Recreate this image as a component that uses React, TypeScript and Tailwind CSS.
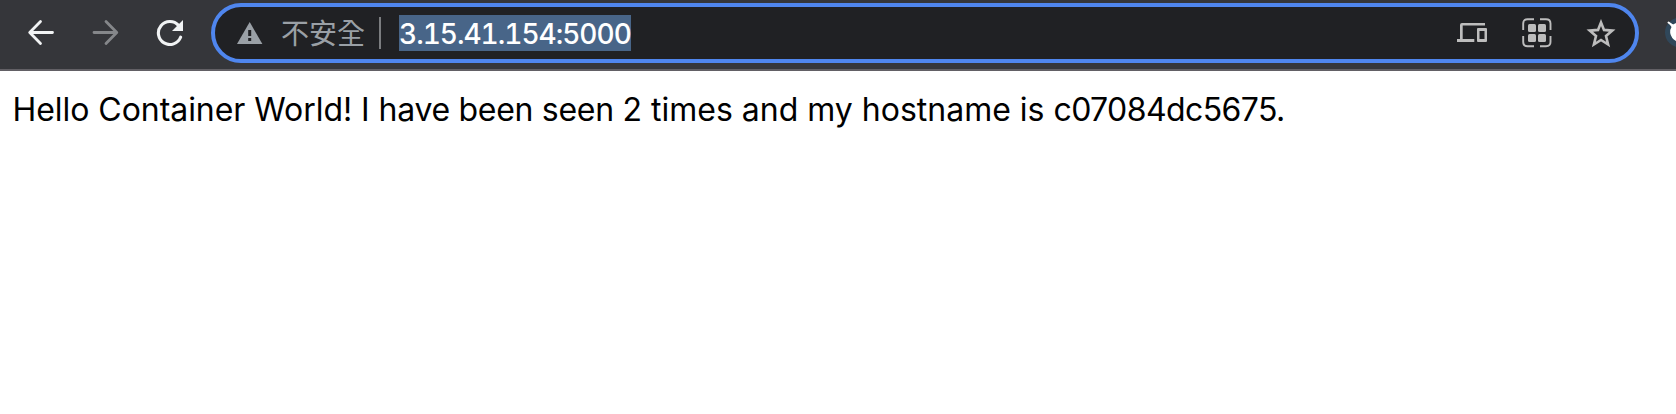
import React from "react";

function BackIcon() {
  return (
    <svg width="28" height="28" viewBox="0 0 28 28" fill="none" stroke="#f1f3f4" strokeWidth="2.8" className="shrink-0">
      <path d="M25.5 14.5H3M13.5 3.5L2.7 14.5L13.5 25.5" strokeLinecap="round" strokeLinejoin="round" />
    </svg>
  );
}

function ForwardIcon() {
  return (
    <svg width="28" height="28" viewBox="0 0 28 28" fill="none" stroke="#85878a" strokeWidth="2.8" className="shrink-0">
      <path d="M3 14.5H25M15 3.5L25.8 14.5L15 25.5" strokeLinecap="round" strokeLinejoin="round" />
    </svg>
  );
}

function ReloadIcon() {
  return (
    <svg width="29" height="28" viewBox="0 0 29 28" fill="none" className="shrink-0">
      <path d="M23.5 7.4A11.5 11.5 0 1 0 25.6 19.2" stroke="#f1f3f4" strokeWidth="3.1" strokeLinecap="round" />
      <path d="M28 2V13H17Z" fill="#f1f3f4" />
    </svg>
  );
}

function WarningIcon() {
  return (
    <svg width="26" height="22" viewBox="0 0 26 22" className="shrink-0">
      <path d="M12.7 0L25.4 22H0Z" fill="#9aa0a6" />
      <path d="M11.2 8h3v6h-3zM11.2 16h3v3h-3z" fill="#202124" />
    </svg>
  );
}

function DevicesIcon() {
  return (
    <svg width="30" height="20" viewBox="0 0 30 20" className="shrink-0" fill="#bdbdbd">
      <path d="M5 0H28V2.5H5.7V16H17.3V19H0V16H3V2Q3 0 5 0Z" />
      <path fillRule="evenodd" d="M21 5H29Q30 5 30 6V18Q30 19 29 19H21Q20 19 20 18V6Q20 5 21 5ZM22.5 8V16H27.5V8Z" />
    </svg>
  );
}

function GridIcon() {
  return (
    <svg width="30" height="30" viewBox="0 0 30 30" fill="none" className="shrink-0">
      <path
        d="M1.2 12V5.5Q1.2 1.2 5.5 1.2H12M18 1.2H24Q28.5 1.2 28.5 5.5V12M28.5 18V24Q28.5 28.2 24 28.2H18M12 28.2H5.5Q1.2 28.2 1.2 24V18"
        stroke="#bdbdbd"
        strokeWidth="1.9"
      />
      <g fill="#bdbdbd">
        <rect x="6" y="6" width="8" height="8" rx="1.5" />
        <rect x="16" y="6" width="8" height="8" rx="1.5" />
        <rect x="6" y="16" width="8" height="8" rx="1.5" />
        <rect x="16" y="16" width="8" height="8" rx="1.5" />
      </g>
    </svg>
  );
}

function StarIcon() {
  return (
    <svg width="30" height="29" viewBox="0 0 30 29" fill="none" className="shrink-0">
      <path
        d="M15 3.4L18 10.9L26.3 11.6L20 17L22.1 25.5L15 21L7.9 25.5L10 17L3.7 11.6L12 10.9Z"
        stroke="#bdbdbd"
        strokeWidth="2.6"
      />
    </svg>
  );
}

function ExtensionIcon() {
  return (
    <svg width="12" height="32" viewBox="0 0 12 32" className="shrink-0">
      <circle cx="16" cy="16.5" r="15" fill="#30475a" />
      <path d="M4.5 6.5L9 8.5L12 7V25Q7 22 6.2 17Q6 13 7.5 11Z" fill="#fff" />
      <path d="M4.5 6.5L8 9" stroke="#fff" strokeWidth="2" strokeLinecap="round" />
    </svg>
  );
}

export default function App() {
  return (
    <div className="h-[414px] w-full overflow-hidden bg-white">
      <header className="flex h-[71px] items-start overflow-hidden border-b-2 border-[#626065] bg-[#35363a]">
        <nav className="flex w-[211px] shrink-0 gap-9 pl-[27px] pt-[18px]">
          <BackIcon />
          <ForwardIcon />
          <ReloadIcon />
        </nav>
        <div className="mt-[3px] flex h-[60px] w-[1428px] shrink-0 items-center rounded-full border-4 border-[#4f86ee] bg-[#202124] pl-[22px] pr-[19px]">
          <WarningIcon />
          <span className="mb-0.5 ml-[18px] w-[84px] whitespace-nowrap font-['Noto_Sans_CJK_TC',sans-serif] text-[28px] leading-9 text-[#9aa0a6]">
            不安全
          </span>
          <span className="ml-[14px] h-8 w-0.5 bg-[#7b7d80]" />
          <span className="ml-[18px] h-9 w-[232px] whitespace-nowrap bg-[#486588] font-[Inter,sans-serif] text-[28px] font-medium tabular-nums leading-[38px] tracking-[-1px] text-white">
            3.15.41.154:5000
          </span>
          <div className="ml-auto flex items-center">
            <DevicesIcon />
            <span className="ml-[35px]">
              <GridIcon />
            </span>
            <span className="ml-[34px]">
              <StarIcon />
            </span>
          </div>
        </div>
        <div className="ml-auto pt-[16px]">
          <ExtensionIcon />
        </div>
      </header>
      <main className="px-[12.5px] pt-[18px]">
        <p className="whitespace-nowrap font-[Inter,sans-serif] text-[32px] leading-[42px] text-black">
          <span className="tracking-[-0.05px]">Hello Container World! I </span>
          <span className="tracking-[-0.3px]">have been seen </span>
          2 times and my hostname is <span className="tracking-[-0.6px]">c07084dc5675.</span>
        </p>
      </main>
    </div>
  );
}
